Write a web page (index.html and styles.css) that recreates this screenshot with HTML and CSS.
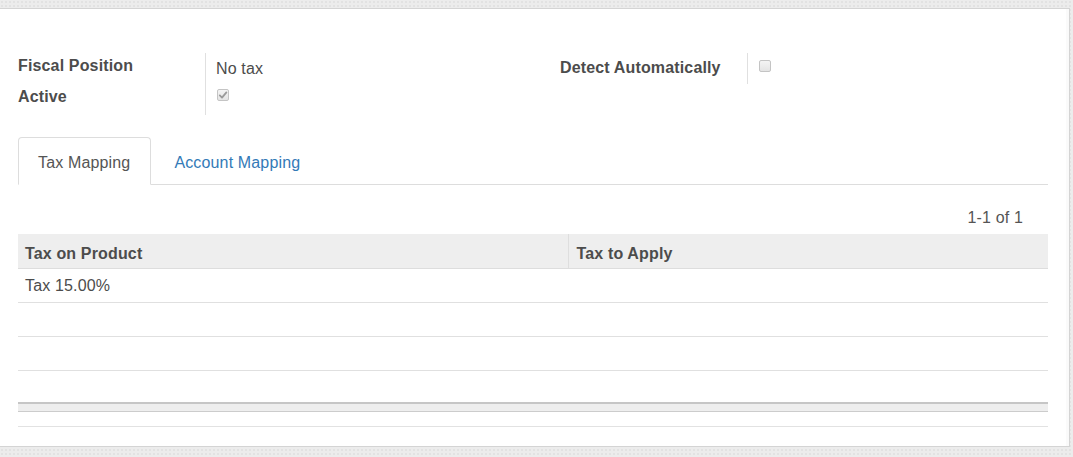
FILE: index.html
```html
<!DOCTYPE html>
<html>
<head>
<meta charset="utf-8">
<link rel="stylesheet" href="styles.css">
</head>
<body>
<div class="sheet">
  <div class="groups">
    <div class="group left">
      <div class="row">
        <div class="label">Fiscal Position</div>
        <div class="value text">No tax</div>
      </div>
      <div class="row">
        <div class="label">Active</div>
        <div class="value"><span class="cb checked"><svg viewBox="0 0 12 12" width="12" height="12"><path d="M2.8 6.4 L5 8.6 L9.4 3.4" fill="none" stroke="#9a9a9a" stroke-width="1.8" stroke-linecap="round" stroke-linejoin="round"/></svg></span></div>
      </div>
    </div>
    <div class="group right">
      <div class="row">
        <div class="label r">Detect Automatically</div>
        <div class="value"><span class="cb r"></span></div>
      </div>
    </div>
  </div>

  <ul class="tabs">
    <li class="tab active">Tax Mapping</li>
    <li class="tab link">Account Mapping</li>
  </ul>

  <div class="pager">1-1 of 1</div>

  <table class="list">
    <thead>
      <tr><th class="c1">Tax on Product</th><th class="c2">Tax to Apply</th></tr>
    </thead>
    <tbody>
      <tr><td>Tax 15.00%</td><td></td></tr>
      <tr><td></td><td></td></tr>
      <tr><td></td><td></td></tr>
      <tr class="last"><td></td><td></td></tr>
    </tbody>
    <tfoot>
      <tr><td></td><td></td></tr>
    </tfoot>
  </table>
  <div class="after"></div>
</div>
</body>
</html>
```

FILE: styles.css
```css
html, body {
  margin: 0;
  padding: 0;
}
body {
  background-color: #ececec;
  background-image: radial-gradient(circle, #e2e2e2 0.8px, transparent 1px);
  background-size: 4px 4px;
  font-family: "Liberation Sans", Arial, Helvetica, sans-serif;
  font-size: 16px;
  letter-spacing: 0.15px;
  color: #4c4c4c;
  height: 457px;
  overflow: hidden;
}
.sheet {
  margin-top: 8px;
  width: 1070px;
  background: #fff;
  border: 1px solid #d4d4d4;
  border-left: none;
  box-shadow: inset -3px 0 0 #fafafa;
  padding: 44px 0 19px 18px;
  box-sizing: border-box;
  height: 439px;
}
.groups {
  display: grid;
  grid-template-columns: 542px 1fr;
}
.row {
  display: flex;
  height: 31px;
}
.label {
  width: 188px;
  box-sizing: border-box;
  border-right: 1px solid #e0e0e0;
  font-weight: bold;
  line-height: 20px;
  padding-top: 3px;
}
.label.r {
  padding-top: 5px;
}
.value {
  padding-left: 11px;
  line-height: 20px;
}
.value.text {
  padding-top: 6px;
  padding-left: 10px;
}
.cb {
  display: block;
  width: 12px;
  height: 12px;
  box-sizing: border-box;
  border: 1px solid #c4c4c4;
  border-radius: 2px;
  background: linear-gradient(#f4f4f4, #e4e4e4);
  margin-top: 5px;
  position: relative;
}
.cb.r {
  margin-top: 7px;
}
.cb svg {
  position: absolute;
  left: -1px;
  top: -1px;
}
.tabs {
  list-style: none;
  margin: 22px 21px 0 0;
  padding: 0;
  display: flex;
  border-bottom: 1px solid #dddddd;
}
.tab {
  line-height: 20px;
  padding: 15px 19px 11px 19px;
  margin-right: 2px;
  margin-bottom: -1px;
  border: 1px solid transparent;
  border-radius: 4px 4px 0 0;
}
.tab.active {
  border-color: #dddddd;
  border-bottom-color: #fff;
  background: #fff;
  color: #555;
  padding-right: 20px;
}
.tab.link {
  color: #337ab7;
  padding-left: 20px;
}
.pager {
  text-align: right;
  line-height: 20px;
  margin-top: 23px;
  padding-right: 46px;
  color: #555;
}
.list {
  margin-top: 6px;
  width: 1030px;
  border-collapse: collapse;
  table-layout: fixed;
}
.list th {
  background: #eeeeee;
  font-weight: bold;
  text-align: left;
  height: 34px;
  box-sizing: border-box;
  padding: 6px 7px 0 7px;
  border-bottom: 1px solid #dddddd;
  line-height: 20px;
}
.list th.c1 {
  width: 550px;
}
.list th.c2 {
  border-left: 1px solid #dedede;
  padding-left: 8px;
}
.list td {
  height: 34px;
  box-sizing: border-box;
  padding: 2px 7px 0 7px;
  border-bottom: 1px solid #e0e0e0;
  line-height: 20px;
}
.list tr.last td {
  height: 33px;
  border-bottom: none;
}
.list tfoot td {
  height: 8px;
  padding: 0;
  background: #eeeeee;
  border-top: 2px solid #c6c6c6;
  border-bottom: 1px solid #cccccc;
}
.after {
  width: 1030px;
  height: 14px;
  border-bottom: 1px solid #e2e2e2;
}
```
